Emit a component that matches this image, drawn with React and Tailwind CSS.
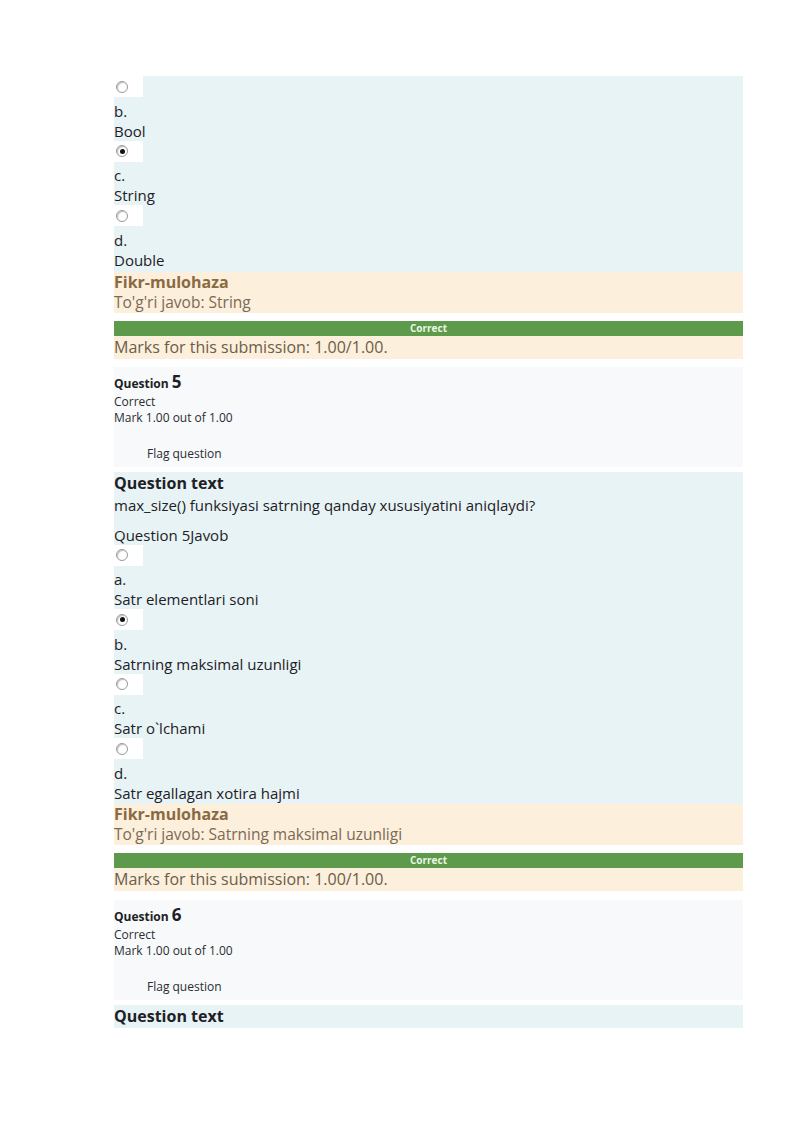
import React from "react";

const font = { fontFamily: '"Open Sans", "Noto Sans", sans-serif' };

function Radio({ checked }) {
  return (
    <div className="h-[24.5px]">
      <div className="w-[29px] h-[21px] bg-white flex items-center pl-[2px]">
        <span className="w-[12px] h-[12px] rounded-full border border-[#9a9a9a] bg-white flex items-center justify-center shadow-[inset_1px_1px_1px_rgba(0,0,0,0.25)]">
          {checked && <span className="w-[5px] h-[5px] rounded-full bg-[#111]" />}
        </span>
      </div>
    </div>
  );
}

function Line({ children }) {
  return <div className="h-[20px] leading-[20px] text-[15px] text-[#1d2125] whitespace-nowrap">{children}</div>;
}

function Option({ letter, text, checked }) {
  return (
    <>
      <Radio checked={checked} />
      <Line>{letter}</Line>
      <Line>{text}</Line>
    </>
  );
}

function Feedback({ answer }) {
  return (
    <>
      <div className="bg-[#fcefdc] pb-[1px]">
        <div className="h-[20px] leading-[20px] text-[16px] font-bold text-[#8a6a42]">Fikr-mulohaza</div>
        <div className="h-[20px] leading-[20px] text-[15.5px] text-[#7b6a55]">To'g'ri javob: {answer}</div>
      </div>
      <div className="h-[8px]" />
      <div className="h-[15px] bg-[#5e9a4c] flex items-center justify-center text-[10px] font-bold text-[#eaf5e4] leading-none">
        Correct
      </div>
      <div className="bg-[#fcefdc] h-[23px] leading-[23px] text-[16px] text-[#6d5d48]">
        Marks for this submission: 1.00/1.00.
      </div>
    </>
  );
}

function Info({ n }) {
  return (
    <div className="bg-[#f7f9fb] pt-[3px] pb-[5px]">
      <div className="h-[20px] flex items-end leading-none text-[#1d2125]">
        <span className="text-[12px] font-bold">Question</span>
        <span className="text-[17px] font-bold ml-[3px]">{n}</span>
      </div>
      <div className="h-[16px] leading-[16px] text-[12px] text-[#2a2d31] mt-[4px]">Correct</div>
      <div className="h-[16px] leading-[16px] text-[12px] text-[#2a2d31]">Mark 1.00 out of 1.00</div>
      <div className="h-[20px]" />
      <div className="h-[16px] leading-[16px] text-[12px] text-[#2a2d31] pl-[33px]">Flag question</div>
    </div>
  );
}

export default function App() {
  return (
    <div style={font} className="bg-white w-[800px] h-[1131px] pl-[114px] pt-[76px]">
      <div className="w-[629px]">
        <div className="bg-[#e8f3f5] pb-[2px]">
          <Radio />
          <Line>b.</Line>
          <Line>Bool</Line>
          <Option letter="c." text="String" checked />
          <Option letter="d." text="Double" />
        </div>
        <Feedback answer="String" />
        <div className="h-[8px]" />
        <Info n="5" />
        <div className="h-[5px]" />
        <div className="bg-[#e8f3f5] pb-[1px]">
          <div className="h-[23px] leading-[23px] text-[16px] font-bold text-[#1d2125]">Question text</div>
          <Line>max_size() funksiyasi satrning qanday xususiyatini aniqlaydi?</Line>
          <div className="h-[10px]" />
          <Line>Question 5Javob</Line>
          <Option letter="a." text="Satr elementlari soni" />
          <Option letter="b." text="Satrning maksimal uzunligi" checked />
          <Option letter="c." text="Satr o`lchami" />
          <Option letter="d." text="Satr egallagan xotira hajmi" />
        </div>
        <Feedback answer="Satrning maksimal uzunligi" />
        <div className="h-[9px]" />
        <Info n="6" />
        <div className="h-[5px]" />
        <div className="bg-[#e8f3f5] h-[23px] leading-[23px] text-[16px] font-bold text-[#1d2125]">Question text</div>
      </div>
    </div>
  );
}
